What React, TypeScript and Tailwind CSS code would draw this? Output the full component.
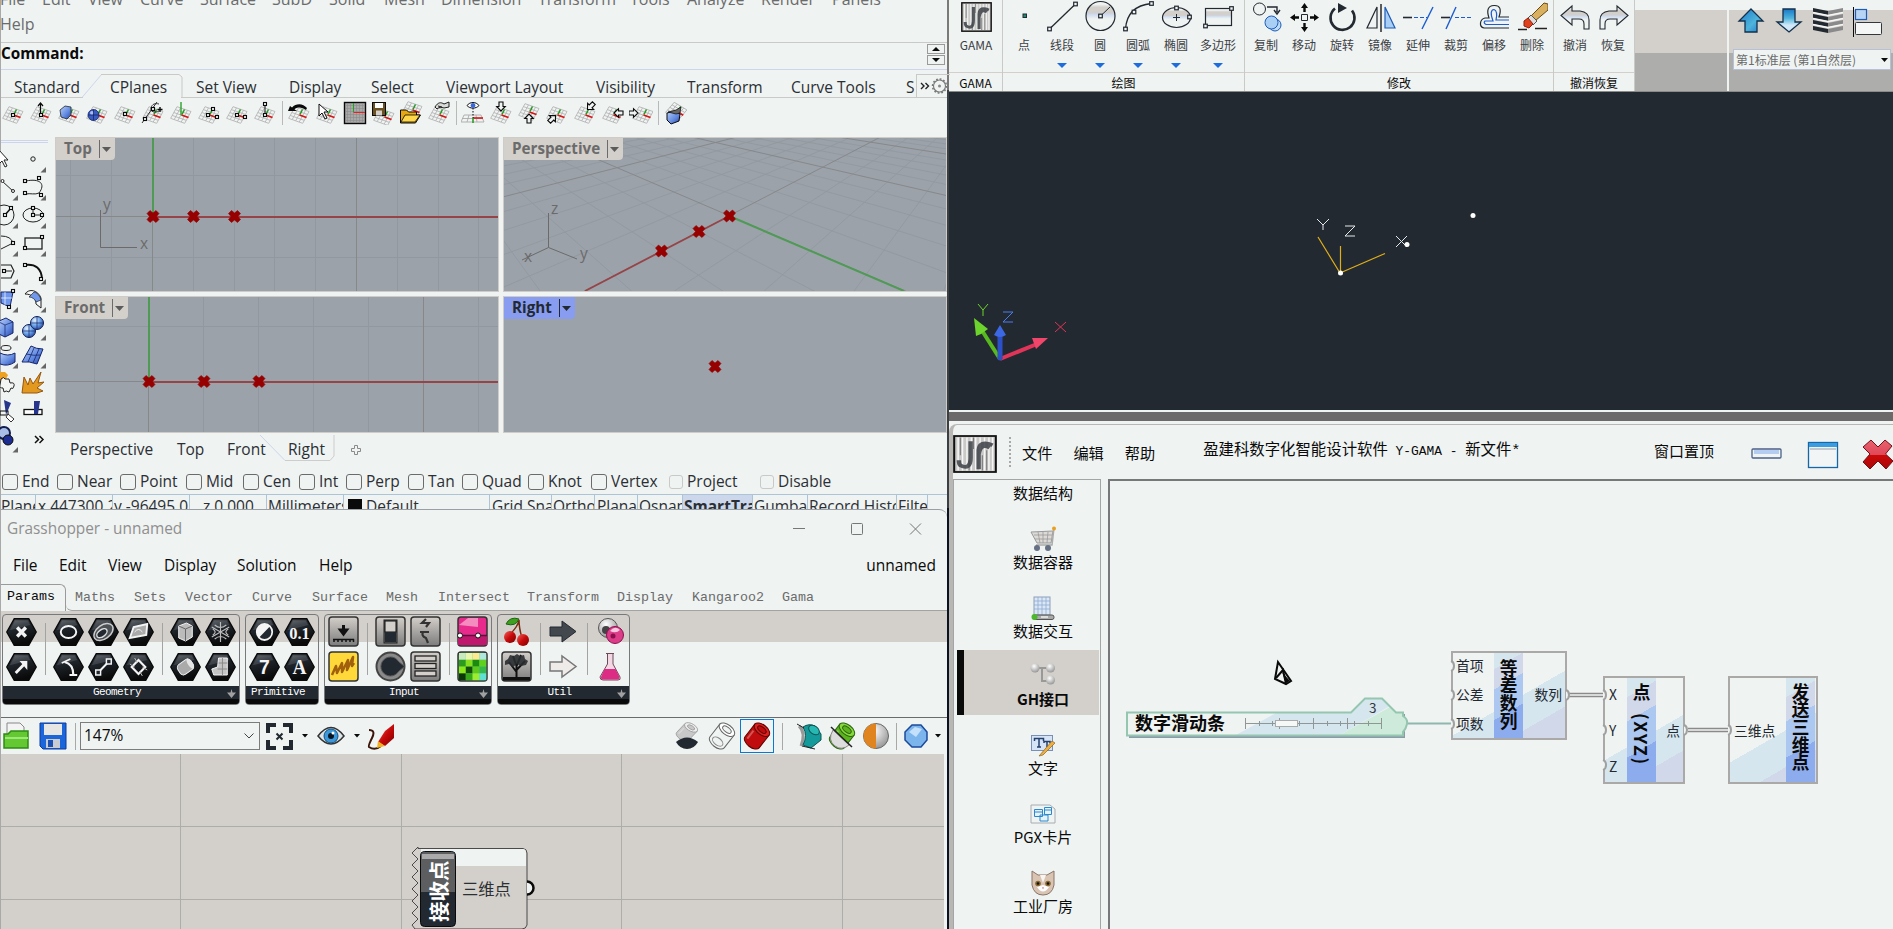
import React, { ReactNode } from "react";

type Cell = [string, string];

const UI = "[font-family:'Open_Sans','Noto_Sans_CJK_SC',sans-serif]";
const CJK = "[font-family:'Noto_Sans_CJK_SC',sans-serif]";
const MONO = "[font-family:'Liberation_Mono','Noto_Sans_CJK_SC',monospace]";

function Svg({ w, h, vb, className = "", children }: { w: number; h: number; vb?: string; className?: string; children: ReactNode }) {
  return (
    <svg width={w} height={h} viewBox={vb ?? `0 0 ${w} ${h}`} preserveAspectRatio="none" className={`block shrink-0 ${className}`} fill="none">
      {children}
    </svg>
  );
}

function Defs() {
  return (
    <svg className="absolute h-0 w-0">
      <defs>
        <linearGradient id="hex" x1="0" y1="0" x2="0.3" y2="1">
          <stop offset="0" stopColor="#5a5e62" />
          <stop offset="0.35" stopColor="#222930" />
          <stop offset="1" stopColor="#0a0a0a" />
        </linearGradient>
        <linearGradient id="metal" x1="0" y1="0" x2="0" y2="1">
          <stop offset="0" stopColor="#d3cfca" />
          <stop offset="1" stopColor="#7c7c7c" />
        </linearGradient>
        <linearGradient id="blue" x1="0" y1="0" x2="1" y2="1">
          <stop offset="0" stopColor="#bcd0f8" />
          <stop offset="0.6" stopColor="#5f88e0" />
          <stop offset="1" stopColor="#2a44a0" />
        </linearGradient>
        <linearGradient id="sky" x1="0" y1="0" x2="0" y2="1">
          <stop offset="0.1" stopColor="#eff3f2" />
          <stop offset="0.2" stopColor="#d3cfca" />
          <stop offset="0.4" stopColor="#d3cfca" />
          <stop offset="0.42" stopColor="#c9d6ee" />
          <stop offset="0.6" stopColor="#eff3f2" />
        </linearGradient>
        <linearGradient id="arrowUp" x1="0" y1="0" x2="1" y2="1">
          <stop offset="0" stopColor="#1977c8" />
          <stop offset="0.6" stopColor="#4fb4dc" />
          <stop offset="1" stopColor="#1977c8" />
        </linearGradient>
        <linearGradient id="arrowDown" x1="0" y1="0" x2="0" y2="1">
          <stop offset="0" stopColor="#1977c8" />
          <stop offset="0.4" stopColor="#4fb4dc" />
          <stop offset="0.7" stopColor="#d0e8f8" />
        </linearGradient>
        <linearGradient id="red" x1="0" y1="0" x2="1" y2="1">
          <stop offset="0" stopColor="#f26060" />
          <stop offset="0.5" stopColor="#c80a0a" />
          <stop offset="1" stopColor="#7c0000" />
        </linearGradient>
        <linearGradient id="cross" x1="0" y1="0" x2="0" y2="1">
          <stop offset="0.05" stopColor="#e8606c" />
          <stop offset="0.5" stopColor="#e04858" />
          <stop offset="0.52" stopColor="#cc0808" />
          <stop offset="1" stopColor="#a80808" />
        </linearGradient>
        <radialGradient id="ball" cx="0.35" cy="0.3" r="0.8">
          <stop offset="0" stopColor="#e4f0ff" />
          <stop offset="0.5" stopColor="#6aa4ea" />
          <stop offset="1" stopColor="#24409c" />
        </radialGradient>
        <radialGradient id="pearl" cx="0.4" cy="0.3" r="0.8">
          <stop offset="0" stopColor="#ffffff" />
          <stop offset="1" stopColor="#8a8a8a" />
        </radialGradient>
      </defs>
    </svg>
  );
}

/* ---------- Rhino toolbar icons ---------- */

function Plane() {
  const lines: string[] = [];
  for (let i = 0; i <= 4; i++) {
    const t = i / 4;
    lines.push(`M${8 + 14 * t} ${5.7 + 4.8 * t}L${1.7 + 14 * t} ${17.3 + 5 * t}`);
    lines.push(`M${8 - 6.4 * t} ${5.7 + 11.6 * t}L${22 - 6.4 * t} ${10.5 + 11.8 * t}`);
  }
  return (
    <>
      <path d={lines.join("")} stroke="#b4b6b4" strokeWidth="0.9" />
      <path d="M13 13.5L15.5 8.5" stroke="#1c9a1c" strokeWidth="1.4" />
      <path d="M12.5 14L19.5 16.5" stroke="#d81414" strokeWidth="1.7" />
    </>
  );
}

const Sq = ({ x, y }: { x: number; y: number }) => <rect x={x - 1.5} y={y - 1.5} width="3" height="3" fill="#eff3f2" stroke="#0a0a0a" strokeWidth="1.1" />;

const arrowShape = "M0 -5L4.3 -0.5H2V4H-2V-0.5H-4.3Z";
const OutArrow = ({ x, y, r }: { x: number; y: number; r: number }) => (
  <path d={arrowShape} transform={`translate(${x} ${y}) rotate(${r})`} fill="#eff3f2" stroke="#0a0a0a" strokeWidth="1.1" />
);

const planeIcons: ReactNode[][] = [
  [
    <><Plane /><Sq x={12} y={14} /></>,
    <><Plane /><path d="M11.5 13V2M9 5l2.5-3L14 5" stroke="#0a0a0a" strokeWidth="1.2" /><Sq x={12} y={14} /></>,
    <><Plane /><path d="M3 9l5-4 6 1v8l-4 4-6-2z" fill="url(#blue)" stroke="#222930" strokeWidth=".8" /></>,
    <><Plane /><circle cx="8.5" cy="14" r="5.5" fill="#3a5cc0" stroke="#14246c" strokeWidth=".8" /><circle cx="7" cy="12" r="2" fill="#a8bcf0" /><path d="M3 14h11M8.5 8.5v11" stroke="#14246c" strokeWidth=".8" /></>,
    <><Plane /><Sq x={12} y={13} /></>,
    <><Plane /><path d="M1 22L16 1M18 3c-4-1-7 0-8 4s4 5 8 3" stroke="#333" strokeWidth="1" /><path d="M19 6v5M16.5 8.500h5" stroke="#0a0a0a" strokeWidth="1.4" /><Sq x={4} y={18} /><Sq x={12} y={8} /></>,
    <><Plane /><path d="M12 14V1" stroke="#2aa12a" strokeWidth="1.4" /></>,
    <><Plane /><Sq x={11} y={14} /><Sq x={16} y={8} /><Sq x={20} y={16} /></>,
    <><Plane /><Sq x={12} y={14} /><Sq x={20} y={16} /></>,
    <><Plane /><path d="M12 12V4" stroke="#0a0a0a" /><Sq x={12} y={14} /><Sq x={12} y={3} /></>,
  ],
  [
    <><Plane /><path d="M1 10L3 5L5 6.500C9 2 16 2 20 7L19 9C15 6 10 5.500 7.500 8.500L10 10z" fill="#0a0a0a" /></>,
    <><Plane /><path d="M4 3v12l3-3 3 6 2-1-3-6h4z" fill="#fff" stroke="#0a0a0a" /></>,
    <><rect x="1.500" y="1.500" width="21" height="21" fill="#a9a9a9" stroke="#0a0a0a" strokeWidth="1.4" /><path d="M4.500 2v20M7.500 2v20M10.500 2v20M13.500 2v20M16.500 2v20M19.500 2v20M2 4.500h20M2 7.500h20M2 10.500h20M2 13.500h20M2 16.500h20M2 19.500h20" stroke="#8c8c8c" strokeWidth=".6" /><path d="M10.500 11V2" stroke="#1ea51e" /><path d="M10.500 11.500H22" stroke="#e82020" /></>,
    <><g transform="translate(1 2)"><Plane /></g><rect x="1.500" y="1.500" width="13" height="13" fill="#6b5020" stroke="#0a0a0a" /><rect x="4" y="2" width="8" height="5" fill="#fff" /><rect x="5" y="9.500" width="6" height="5" fill="#d3cfca" /></>,
    <><g transform="translate(1 -5)"><Plane /></g><path d="M1.500 21V9h6l2 2h8v3h4l-5 8H1.500z" fill="#e8a810" stroke="#0a0a0a" /><path d="M2 21l4-7h15l-5 7z" fill="#ffd84a" stroke="#0a0a0a" strokeWidth=".8" /></>,
    <><Plane /><path d="M8 6c3-5 6-5 9-3l5-2v5l-5 1c-3-1-5-1-7 1zM11 5l4 1" fill="#d8dad8" stroke="#0a0a0a" strokeWidth=".9" /></>,
  ],
  [
    <><path d="M3 14h17l3 7H0zM1 17.500h20M8 14l-2 7M15 14l1 7" stroke="#aaa" strokeWidth=".9" /><path d="M12 17h10" stroke="#d81414" strokeWidth="1.6" /><path d="M12 17v5" stroke="#1c9a1c" strokeWidth="1.5" /><path d="M12 7v10" stroke="#0a0a0a" strokeDasharray="1.500 1.500" /><path d="M6 4.500c3-4 9-4 12 0-3 3.500-9 3.500-12 0z" fill="#fff" stroke="#0a0a0a" /><circle cx="12" cy="4.500" r="2.400" fill="#3a66dc" /></>,
    <><Plane /><OutArrow x={12} y={5} r={180} /></>,
    <><g transform="translate(0 -3)"><Plane /></g><OutArrow x={12} y={18} r={0} /></>,
    <><Plane /><OutArrow x={7} y={18} r={45} /></>,
    <><Plane /><OutArrow x={18} y={5} r={225} /></>,
    <><Plane /><OutArrow x={18} y={12} r={-90} /></>,
    <><g transform="translate(2 0)"><Plane /></g><OutArrow x={4} y={12} r={90} /></>,
  ],
  [
    <><g transform="rotate(12 12 12) translate(1 -4)"><Plane /></g><path d="M4 12l8-2 5 3-1 7-8 3-4-4z" fill="url(#blue)" stroke="#0a0a0a" /><path d="M5 11l8-2 5-3-1 6-4 1z" fill="#666" stroke="#0a0a0a" strokeWidth=".7" /></>,
  ],
];

const ptBlob = "M-3 -6L0 -3.500L3 -6L6 -3L3.500 0L6 3L3 6L0 3.500L-3 6L-6 3L-3.500 0L-6 -3Z";
const Mark = ({ x, y }: { x: number; y: number }) => <path d={ptBlob} transform={`translate(${x} ${y})`} fill="#960000" stroke="#960000" strokeWidth=".6" />;

const toolIcons: [ReactNode, ReactNode][] = [
  [<path d="M8 5v14l3-3 3 6 2-1-3-6h4z" fill="#fff" stroke="#222" />, <circle cx="14" cy="14" r="2.200" stroke="#222" />],
  [<><path d="M11 8l12 11" stroke="#222" /><circle cx="11.500" cy="8" r="1.500" stroke="#222" fill="#fff" /><circle cx="22" cy="18" r="1.500" stroke="#222" fill="#fff" /></>, <><path d="M7 8c14-3 20 3 13 12-4 2-9 0-13 1" stroke="#222" /><Sq x={6} y={8} /><Sq x={20} y={5} /><Sq x={6} y={20} /><Sq x={22} y={22} /></>],
  [<><circle cx="13" cy="14" r="10" stroke="#222" /><path d="M14 14l6-7" stroke="#111" strokeWidth="1.5" /><Sq x={14} y={14} /><Sq x={20} y={7} /></>, <><ellipse cx="14" cy="14" rx="10" ry="7" stroke="#222" /><path d="M14 7v7h9" stroke="#222" /><Sq x={14} y={14} /><Sq x={14} y={7} /><Sq x={23} y={14} /></>],
  [<><path d="M10 7q10 0 12 7l-12 6" stroke="#222" /><Sq x={22} y={14} /></>, <><rect x="6" y="9" width="17" height="11" stroke="#222" strokeWidth="1.300" /><Sq x={23} y={8} /><Sq x={6} y={19} /></>],
  [<><path d="M10 8h10l3 6-3 7h-10" stroke="#222" strokeWidth="1.200" /><path d="M13 14h8" stroke="#222" /><Sq x={13} y={14} /></>, <><path d="M6 8q16 -2 17 14" stroke="#111" strokeWidth="2" /><Sq x={6} y={8} /><Sq x={22} y={22} /></>],
  [<><path d="M10 7h12l-3 15-9-4z" fill="#6f97ee" stroke="#14246c" /><path d="M14 7v13M10 13h11" stroke="#fff" strokeWidth=".7" /><Sq x={22} y={6} /><Sq x={18} y={22} /></>, <><path d="M6 9c4-6 13-4 16 4v10l-5-4c0-7-5-10-11-10z" fill="#f8fafa" stroke="#222" /><path d="M10 12l5-5c4 1 6 4 7 8l-5 2c-1-3-4-5-7-5z" fill="#7098ec" stroke="#222" strokeWidth=".7" /></>],
  [<><path d="M8 8l7-3 7 4v11l-8 4-6-3z" fill="url(#blue)" stroke="#14246c" /><path d="M8 9l6 3 8-3M14 12v12" stroke="#14246c" strokeWidth=".7" /></>, <><circle cx="10" cy="18" r="6.500" fill="url(#ball)" stroke="#101c50" /><circle cx="18" cy="10" r="6.500" fill="url(#ball)" stroke="#101c50" /><path d="M4 18h12M10 12v12M12 10h12M18 4v12" stroke="#14246c" strokeWidth=".7" /></>],
  [<><ellipse cx="15" cy="7" rx="5" ry="2.500" stroke="#222" /><path d="M9 12q8 4 15 0v9q-7 5-15 2z" fill="url(#blue)" stroke="#14246c" /></>, <><path d="M12 5q5 3 12 3l-6 15q-8-3-15-2z" fill="url(#blue)" stroke="#14246c" /><path d="M7 13q8 2 15 1M15 7l-6 14M20 8l-6 14" stroke="#14246c" strokeWidth=".8" /></>],
  [<><path d="M6 3h8l3 3-3 6H8z" fill="#f0a020" /><path d="M10 10q3-3 4 0h4l1 4q5-1 4 3t-3 2l-2 4q-3-2-5 0l-1-4q-4 0-3-3z" fill="#f4f6f4" stroke="#222" /></>, <path d="M3 24L5 8l4 8 2-7 3 6 8-12-3 11 6-1-7 6 6 3-6 2z" fill="#e39820" stroke="#96570c" />],
  [<><path d="M13 3l7 3-5 12z" fill="#26368c" /><rect x="9" y="14" width="8" height="4" stroke="#111" /><path d="M17 17l6 5-3 3-5-5z" fill="#fff" stroke="#333" /></>, <><rect x="5" y="12.500" width="18" height="5" fill="#fff" stroke="#111" strokeWidth="1.300" /><path d="M15 4h6l-2 13h-4z" fill="#26368c" /></>],
  [<><circle cx="13" cy="8" r="6" fill="#a8bce8" stroke="#101c50" strokeWidth="2" /><circle cx="17" cy="15" r="5" fill="#1c2c90" stroke="#0a0a0a" /></>, <path d="M16 11l3.500 3.500L16 18M20.500 11l3.500 3.500L20.500 18" stroke="#111" strokeWidth="1.500" />],
];

/* ---------- Rhino window ---------- */

const menuItems: Cell[] = [
  ["File", "w-[42px]"], ["Edit", "w-[46px]"], ["View", "w-[52px]"], ["Curve", "w-[60px]"], ["Surface", "w-[72px]"], ["SubD", "w-[57px]"],
  ["Solid", "w-[55px]"], ["Mesh", "w-[57px]"], ["Dimension", "w-[97px]"], ["Transform", "w-[92px]"], ["Tools", "w-[57px]"],
  ["Analyze", "w-[74px]"], ["Render", "w-[71px]"], ["Panels", "w-[60px]"],
];
const topTabs: Cell[] = [
  ["Standard", "w-[96px]"], ["CPlanes", "w-[86px]"], ["Set View", "w-[93px]"], ["Display", "w-[82px]"], ["Select", "w-[75px]"],
  ["Viewport Layout", "w-[150px]"], ["Visibility", "w-[91px]"], ["Transform", "w-[104px]"], ["Curve Tools", "w-[115px]"], ["S", "w-[9px]"],
];
const snaps: Cell[] = [
  ["End", "w-[55px]"], ["Near", "w-[63px]"], ["Point", "w-[66px]"], ["Mid", "w-[57px]"], ["Cen", "w-[56px]"], ["Int", "w-[47px]"], ["Perp", "w-[62px]"],
  ["Tan", "w-[54px]"], ["Quad", "w-[66px]"], ["Knot", "w-[63px]"], ["Vertex", "w-[78px]"], ["Project", "w-[91px]"], ["Disable", "w-[91px]"],
];
const statusCells: Cell[] = [
  ["Plane", "w-[35px]"], ["x 447300.2", "w-[77px] pl-[2px]"], ["y -96495.0", "w-[77px] pl-[1px]"], ["z 0.000", "w-[77px] pl-[13px]"], ["Millimeters", "w-[77px] pl-px"],
  ["Default", "w-[146px] pl-1"], ["Grid Snap", "w-[62px] pl-[2px]"], ["Ortho", "w-[43px] pl-px"], ["Planar", "w-[43px] pl-[2px]"], ["Osnap", "w-[45px] pl-px"],
  ["SmartTrack", "w-[70px] pl-px font-bold bg-[#ccd7ec]"], ["Gumball", "w-[55px] pl-px"], ["Record History", "w-[89px] pl-px"], ["Filter", "w-[31px] pl-px"],
];

function RhinoHead() {
  return (
    <>
      <div className="h-[43px] overflow-hidden border-b border-[#c9c9c8] text-[16px] text-[#6b6b6b]">
        <div className="-ml-px -mt-[13px] flex h-[24px] items-center">
          {menuItems.map(([t, w]) => <span key={t} className={`shrink-0 whitespace-nowrap ${w}`}>{t}</span>)}
        </div>
        <div className="-ml-px flex h-[25px] items-center">Help</div>
      </div>
      <div className="flex h-[27px] items-start justify-between border-b border-[#cdd5e8] pr-[2px]">
        <span className="-mt-px text-[15.300px] font-bold leading-[22px] text-[#0a0a0a]">Command:</span>
        <div className="mt-[1px] flex flex-col gap-[1px]">
          {["M0 4L4 0L8 4z", "M0 0L4 4L8 0z"].map((d) => (
            <div key={d} className="flex h-[10px] w-[18px] items-center justify-center border border-[#9a9a9a]"><Svg w={8} h={4}><path d={d} fill="#0a0a0a" /></Svg></div>
          ))}
        </div>
      </div>
      <div className="relative flex h-[28px] items-center border-b border-[#c9c9c8] pl-[13px] text-[15.500px] text-[#2b2f34]">
        <Svg w={110} h={25} className="absolute -bottom-px left-[80px]">
          <path d="M2 24.500H100" stroke="#eff3f2" /><path d="M1 24.500L20.500 1.500" stroke="#cdd5ee" /><path d="M20 1.500H98L101 4V24.500" stroke="#c9c9c8" />
        </Svg>
        {topTabs.map(([t, w]) => <span key={t} className={`relative shrink-0 overflow-hidden whitespace-nowrap pt-[6px] leading-[22px] ${w}`}>{t}</span>)}
        <div className="ml-px mt-[4px] flex h-[24px] items-center border-l border-t border-[#c9c9c8] pl-[3px]">
          <Svg w={30} h={22}>
            <path d="M1 8l3 3L1 14M5.500 8L8.500 11L5.500 14" stroke="#222" strokeWidth="1.400" />
            <circle cx="19.500" cy="11" r="6" stroke="#777" strokeWidth="1.100" /><circle cx="19.500" cy="11" r="7" stroke="#777" strokeWidth="1.500" strokeDasharray="1.800 1.860" /><circle cx="19.500" cy="11" r="1.500" fill="#888" />
          </Svg>
        </div>
      </div>
      <div className="-ml-[2px] flex h-[32px] items-center pb-[3px]">
        {planeIcons.map((g, i) => (
          <React.Fragment key={i}>
            {i > 0 && <div className="flex w-[6px] justify-center"><div className="h-[24px] w-px bg-[#b9b9b7]" /></div>}
            {g.map((ic, j) => <div key={j} className="flex w-[28px] shrink-0 justify-center"><Svg w={24} h={24}>{ic}</Svg></div>)}
          </React.Fragment>
        ))}
      </div>
    </>
  );
}

const GRID = "#92989f";
const MAJOR = "#87888a";

function perspectivePaths() {
  const O = [729.3, 215.7], Vx = [-96.5, -6.1], Vy = [-35, -6], b = 0.0946, e = 0.0931;
  const P = (x: number, y: number) => {
    const w = 1 - b * x - e * y;
    return `${((O[0] + x * Vx[0] + y * Vy[0]) / w).toFixed(1)} ${((O[1] + x * Vx[1] + y * Vy[1]) / w).toFixed(1)}`;
  };
  let minor = "", major = "";
  for (let n = -15; n <= 9; n++) {
    const a = `M${P(n, -25)}L${P(n, Math.min(14, (0.9 - b * n) / e))}M${P(-25, n)}L${P(Math.min(14, (0.9 - e * n) / b), n)}`;
    if (n === 5) continue;
    if (n % 5 === 0) major += a;
    else minor += a;
  }
  return { minor, major };
}
const persp = perspectivePaths();

function ViewLabel({ text, on = false }: { text: string; on?: boolean }) {
  return (
    <div className={`absolute left-0 top-0 flex h-[22px] items-center rounded-br-[4px] pl-[8px] pr-[4px] text-[15.200px] font-bold ${on ? "bg-[#889df0] text-[#222930]" : "bg-[#d3cfca] text-[#6b6b6b]"}`}>
      <span className="-mt-[2px]">{text}</span>
      <span className={`ml-[7px] mr-[2px] h-[18px] w-px ${on ? "bg-[#222930]" : "bg-[#6b6b6b]"}`} />
      <Svg w={9} h={5}><path d="M0 0H9L4.500 5z" fill={on ? "#222930" : "#5b5b5b"} /></Svg>
    </div>
  );
}

function Viewport({ label, vb, h, on, children }: { label: string; vb: string; h: number; on?: boolean; children: ReactNode }) {
  return (
    <div className="relative box-content w-[442px] shrink-0 border border-[#cfccc8] bg-[#9ba2aa]">
      <Svg w={442} h={h} vb={vb}>{children}</Svg>
      <ViewLabel text={label} on={on} />
    </div>
  );
}

function RhinoMain() {
  return (
    <div className="flex h-[303px]">
      <div className="w-[54px] shrink-0 pt-[10px]">
        <div className="h-[3px] w-[47px] border-y border-[#cdd5ee]" />
        <div className="-ml-[10px] mt-[2px]">
          {toolIcons.map(([l, r], i) => (
            <div key={i} className="flex h-[28px]">
              {[l, r].map((ic, j) => (
                <Svg key={j} w={28} h={28}>
                  {ic}
                  {i !== 9 && i !== 8 && !(i === 0 && j === 0) && !(i === 10 && j === 1) && <path d="M21.500 27.500L27 22V27.500z" fill="#666" />}
                </Svg>
              ))}
            </div>
          ))}
        </div>
      </div>
      <div className="mt-[7px] grid grid-cols-[444px_444px] content-start gap-x-[4px] gap-y-[4px]">
        <Viewport label="Top" vb="56 138 442 153" h={153}>
          <path d="M70.500 130V300M111.500 130V300M193.500 130V300M234.500 130V300M274.500 130V300M315.500 130V300M397.500 130V300M438.500 130V300M478.500 130V300M50 175.500H500M50 257.500H500" stroke={GRID} />
          <path d="M356.500 130V300M152.500 216V300M50 216.500H153" stroke={MAJOR} />
          <path d="M153 130V216" stroke="#4f9a54" strokeWidth="2" /><path d="M153 217H500" stroke="#964448" strokeWidth="2" />
          <Mark x={153} y={216.500} /><Mark x={193.500} y={216.500} /><Mark x={234.500} y={216.500} />
          <path d="M100.500 210V247.500H137" stroke="#6b6b6b" />
          <text x="103" y="210" fontSize="15.500" fill="#6b6b6b">y</text><text x="140" y="248.500" fontSize="15.500" fill="#6b6b6b">x</text>
        </Viewport>
        <Viewport label="Perspective" vb="504 138 442 153" h={153}>
          <path d={persp.minor} stroke="#93999f" strokeWidth=".9" /><path d={persp.major} stroke={MAJOR} />
          <path d="M729.300 216L585 291" stroke="#964448" strokeWidth="1.800" /><path d="M729.300 216L904 291" stroke="#4f9a54" strokeWidth="2" />
          <Mark x={729.500} y={216} /><Mark x={699} y={231.500} /><Mark x={661.500} y={251} />
          <path d="M548.500 213V247.500L577 259M548.500 247.500L522 260" stroke="#6b6b6b" />
          <text x="551" y="214" fontSize="15.500" fill="#6b6b6b">z</text><text x="580" y="259" fontSize="15.500" fill="#6b6b6b">y</text><text x="524" y="262" fontSize="15.500" fill="#6b6b6b">x</text>
        </Viewport>
        <Viewport label="Front" vb="56 297 442 135" h={135}>
          <path d="M94.500 290V440M203.500 290V440M258.500 290V440M313.500 290V440M368.500 290V440M478.500 290V440M50 326.500H500" stroke={GRID} />
          <path d="M423.500 290V440M148.500 382V440M50 381.500H149" stroke={MAJOR} />
          <path d="M149 290V381" stroke="#4f9a54" strokeWidth="2" /><path d="M149 382H500" stroke="#964448" strokeWidth="2" />
          <Mark x={149} y={381.500} /><Mark x={204} y={381.500} /><Mark x={259} y={381.500} />
        </Viewport>
        <Viewport label="Right" on vb="504 297 442 135" h={135}><Mark x={715} y={366.500} /></Viewport>
      </div>
    </div>
  );
}

function RhinoFoot() {
  return (
    <>
      <div className="relative flex h-[35px] items-center pb-[2px] pl-[69px] text-[15.500px] text-[#2b2f34]">
        <span className="w-[107px]">Perspective</span><span className="w-[50px]">Top</span><span className="w-[61px]">Front</span><span className="w-[62px]">Right</span>
        <Svg w={12} h={12}><path d="M4.500 1.500h3v3h3v3h-3v3h-3v-3h-3v-3h3z" stroke="#8a8a8a" /></Svg>
        <Svg w={80} h={28} className="absolute left-[258px] top-[1px]"><path d="M1 1L26 26.500" stroke="#cdd5ee" /><path d="M26 26.500H71L75 22V1" stroke="#cdcdcc" /></Svg>
      </div>
      <div className="flex h-[27px] items-center border-b border-[#adc3d6] pl-px pt-[1px] text-[15.500px] text-[#2b2f34]">
        {snaps.map(([t, w], i) => (
          <label key={t} className={`flex shrink-0 items-center gap-[4px] whitespace-nowrap ${w}`}>
            <span className={`block shrink-0 rounded-[3px] border ${i > 10 ? "h-[14px] w-[14px] border-[#c9c9c8]" : "h-[16px] w-[16px] border-[#6b6b6b]"}`} />{t}
          </label>
        ))}
      </div>
      <div className="flex h-[14px] overflow-hidden text-[15.500px] leading-[23px] text-[#2b2f34]">
        {statusCells.map(([t, w]) => (
          <div key={t} className={`flex h-[23px] shrink-0 overflow-hidden whitespace-nowrap border-r border-[#adc3d6] ${w}`}>
            {t === "Default" && <span className="mr-[4px] mt-[4px] h-[13px] w-[14px] shrink-0 bg-[#0a0a0a]" />}{t}
          </div>
        ))}
      </div>
    </>
  );
}

/* ---------- Grasshopper window ---------- */

const Hex = ({ children }: { children: ReactNode }) => (
  <Svg w={31} h={28} vb="0 0 32 28">
    <path d="M8.500 .8H23.500L31.200 14L23.500 27.200H8.500L.8 14Z" fill="url(#hex)" stroke="#0a0a0a" strokeWidth="1.400" />
    <path d="M9.500 2.500H22.500L25 7L5 12L4 12Z" fill="#fff" opacity=".13" />
    {children}
  </Svg>
);
const Tile = ({ fill = "url(#metal)", children }: { fill?: string; children: ReactNode }) => (
  <Svg w={31} h={31}><rect x="1" y="1" width="29" height="29" rx="3" fill={fill} stroke="#333" strokeWidth="1.500" />{children}</Svg>
);
const W = "#f4f4f4";
const HexText = ({ t, serif = true }: { t: string; serif?: boolean }) => (
  <Hex><text x="16" y="21" fontSize={t.length > 1 ? 17 : 20} fontWeight="bold" fill={W} textAnchor="middle" fontFamily={serif ? "Liberation Serif" : "Liberation Sans"}>{t}</text></Hex>
);

const greens = ["#c8e8c0", "#e8f4b0", "#ffe890", "#b0e8e0", "#2c9a1c", "#86e020", "#1c8a10", "#60d020", "#88e818", "#144c0c", "#5cc81c", "#34b84c", "#0c3808", "#36a818", "#9cec30", "#60e0d0"];

const gGeo: ReactNode[][][] = [
  [[<Hex><path d="M11.500 9.500l9 9M20.500 9.500l-9 9" stroke={W} strokeWidth="3.500" /></Hex>, <Hex><path d="M10 20L19 11" stroke={W} strokeWidth="3" /><path d="M14 8h8v9z" fill={W} /></Hex>]],
  [
    [<Hex><ellipse cx="16" cy="14" rx="8" ry="6" stroke={W} strokeWidth="2" /></Hex>, <Hex><path d="M12 9q9 2 9 13" stroke={W} strokeWidth="2.200" /><path d="M9 10l9-4M17 22h8" stroke={W} strokeWidth="1.800" /></Hex>],
    [<Hex><g transform="rotate(-35 16 14)"><ellipse cx="16" cy="14" rx="11" ry="7" fill="#4c5156" stroke="#ccc" strokeWidth="1.500" /><ellipse cx="14" cy="14" rx="6" ry="3.500" fill="#222930" stroke="#ddd" strokeWidth="1.500" /></g></Hex>, <Hex><path d="M10 20L22 8" stroke={W} strokeWidth="2" /><rect x="8" y="17" width="5" height="5" fill="#222930" stroke={W} strokeWidth="1.500" /><rect x="19" y="6" width="5" height="5" fill="#222930" stroke={W} strokeWidth="1.500" /></Hex>],
    [<Hex><path d="M7 20L11 9L25 6L24 17Z" fill="#aaa" stroke={W} strokeWidth="2" /><path d="M12 14q4-5 8 0" stroke={W} /></Hex>, <Hex><path d="M16 7l7 7-7 7-7-7z" stroke={W} strokeWidth="2.200" /><path d="M12 5l3 5M20 23l-3-5M7 11l5 3M25 17l-5-3" stroke="#bbb" /></Hex>],
  ],
  [
    [<Hex><path d="M9 8l8-3 6 3v11l-7 4-7-3z" fill="#bbb" stroke={W} /><path d="M9 8l7 3v12M16 11l7-3" stroke="#666" /></Hex>, <Hex><g transform="rotate(-35 16 14)"><rect x="8" y="8" width="16" height="12" rx="4" fill="#aaa" stroke={W} /><ellipse cx="22" cy="14" rx="2.500" ry="6" fill="#e4e4e4" /></g></Hex>],
    [<Hex><path d="M16 4v20M7 9l18 10M25 9L7 19M10 7q6 5 12 0M10 21q6-5 12 0M8 11q5 3 0 6M24 11q-5 3 0 6" stroke="#bbb" strokeWidth="1.200" /></Hex>, <Hex><path d="M14 5h9v17H9l-2-6 6-2z" fill="#c4c4c4" stroke={W} /><path d="M14 10h9M13 16h10M18 5v17" stroke="#888" /></Hex>],
  ],
];
const gPrim: ReactNode[][][] = [[
  [<Hex><circle cx="16" cy="14" r="8" fill="#222930" stroke={W} strokeWidth="1.800" /><path d="M10.300 19.700L21.700 8.300A8 8 0 0 0 10.300 19.700z" fill={W} /></Hex>, <HexText t="7" serif={false} />],
  [<HexText t="0.1" />, <HexText t="A" />],
]];
const gInput: ReactNode[][][] = [
  [[<Tile><path d="M15.500 9v5M12.500 14l3 4 3-4z" fill="#111" stroke="#111" strokeWidth="3" /><path d="M5 23.500h21M6 26v-3M10 26v-3M14 26v-3M18 26v-3M22 26v-3M25.500 26v-3" stroke="#111" strokeWidth="1.500" /></Tile>, <Tile fill="#ffd83a"><path d="M4 24L8 15L9 22L14 12L14 21L20 9L19 19L25 6L24 15L26 12" stroke="#a0600c" strokeWidth="2.500" strokeLinejoin="round" /></Tile>]],
  [
    [<Tile><rect x="9" y="4" width="13" height="23" fill="#666" stroke="#222" /><rect x="10" y="5" width="11" height="11" fill="#d3cfca" stroke="#111" /><rect x="10" y="16" width="11" height="10" fill="#222930" /></Tile>, <Svg w={31} h={31}><circle cx="15.500" cy="15.500" r="14" fill="#8a8a8a" stroke="#444" strokeWidth="2" /><path d="M15.500 6a9.500 9.500 0 1 0 8 14.500l6-5-6-5a9.500 9.500 0 0 0-8-4.500z" fill="#222930" stroke="#555" /></Svg>],
    [<Tile><path d="M16 3l-4 4h7l-3 4M10 16h9M13 16q-2 4 3 6l2 5" stroke="#333" strokeWidth="2.200" /></Tile>, <Tile>{[5, 12.500, 20].map((y) => <rect key={y} x="5" y={y} width="21" height="5" fill="#d3cfca" stroke="#222" strokeWidth="1.300" />)}</Tile>],
  ],
  [[<Tile fill="#e82a8c"><path d="M1 19H30V29H1z" fill="#c0186c" /><path d="M2 9l9-7h10v9z" fill="#f48cc0" /><path d="M1 19.500h29" stroke="#58103c" strokeWidth="1.500" /><circle cx="3" cy="19.500" r="2.500" fill="#fff" stroke="#111" /><circle cx="21" cy="19.500" r="2.500" fill="#fff" stroke="#111" /></Tile>, <Tile fill="#6c6">{greens.map((c, i) => <rect key={i} x={2 + (i % 4) * 6.8} y={2 + Math.floor(i / 4) * 6.8} width="6.800" height="6.800" fill={c} />)}</Tile>]],
];
const gUtil: ReactNode[][][] = [
  [[<Svg w={31} h={31}><path d="M8 19Q17 11 18 4Q18 12 21 22" stroke="#7a2a10" strokeWidth="1.500" /><path d="M5 8Q9 0 18 3Q15 11 5 8z" fill="#3fa020" stroke="#1c6410" /><circle cx="9" cy="21" r="6" fill="url(#red)" /><circle cx="22" cy="24" r="6" fill="url(#red)" /></Svg>,
    <Tile><rect x="2" y="26" width="27" height="3.500" fill="#111" /><path d="M15.500 27V14M15.500 21L8 11M15.500 19L24 10M15.500 15L12 5M15.500 15L20 4" stroke="#111" strokeWidth="2" /><path d="M4 10l3-2 2-4 4 1 3-2 3 2 4-1 1 4 3 2-2 4-5 1-4-2-4 3-4-3-4 1z" fill="#2a2d30" opacity=".9" /></Tile>]],
  [[<Svg w={31} h={31}><path d="M2 11H14V5L28 15.500L14 26V20H2z" fill="#42484e" stroke="#222930" /></Svg>, <Svg w={31} h={31}><path d="M2 11H14V5L28 15.500L14 26V20H2z" fill="#eeebe8" stroke="#777" strokeWidth="1.500" /></Svg>]],
  [[<Svg w={31} h={31}><circle cx="13" cy="12" r="9.500" fill="url(#pearl)" stroke="#555" /><circle cx="11" cy="14" r="4" fill="#444" /><circle cx="20" cy="19" r="8.500" fill="#dc3c88" stroke="#8c1050" /><path d="M15 15q5-6 10-1-4 4-10 1z" fill="#f9c8e0" /><circle cx="18" cy="20" r="2.500" fill="#8c1050" /></Svg>, <Svg w={31} h={31}><path d="M11 2.500h8M12.500 3v10L5 26q0 3 3 3h15q3 0 2-3L18 13V3" fill="#f3d8e4" stroke="#6c4a58" /><path d="M9.500 18h11l4 8q0 2-2 2.500H8Q5.500 28 6 26z" fill="#dc2c84" /></Svg>]],
];

function Group({ title, cols, w, drop = true }: { title: string; cols: ReactNode[][][]; w: string; drop?: boolean }) {
  return (
    <div className={`flex h-[91px] flex-col overflow-hidden rounded-[4px] border border-[#77797a] ${w}`}>
      <div className="flex h-[72px] items-center justify-between px-[3px] pb-[3px]">
        {cols.map((g, i) => (
          <React.Fragment key={i}>
            {i > 0 && <div className="h-[52px] w-px bg-[#a3a3a2]" />}
            <div className="flex gap-[4px]">
              {g.map((c, j) => (
                <div key={j} className="flex flex-col gap-[4px]">
                  {c.map((ic, k) => <div key={k} className="flex h-[31px] w-[31px] items-center justify-center">{ic}</div>)}
                </div>
              ))}
            </div>
          </React.Fragment>
        ))}
      </div>
      <div className={`relative flex h-[18px] items-start justify-center border-b-[5px] border-[#0a0a0a] bg-[#222930] pr-[8px] text-[11px] leading-[13px] tracking-[-0.600px] text-white ${MONO}`}>
        {title}
        {drop && <Svg w={9} h={9} className="absolute right-[3px] top-[3px]"><path d="M4.500 0L5.500 3.500H9L4.500 9L0 3.500H3.500z" fill="#a0a0a0" /></Svg>}
      </div>
    </div>
  );
}

const ghMenu: Cell[] = [["File", "w-[46px]"], ["Edit", "w-[49px]"], ["View", "w-[56px]"], ["Display", "w-[73px]"], ["Solution", "w-[82px]"], ["Help", "w-[60px]"]];
const ghTabs: Cell[] = [
  ["Maths", "w-[59px]"], ["Sets", "w-[51px]"], ["Vector", "w-[67px]"], ["Curve", "w-[60px]"], ["Surface", "w-[74px]"], ["Mesh", "w-[52px]"],
  ["Intersect", "w-[89px]"], ["Transform", "w-[90px]"], ["Display", "w-[75px]"], ["Kangaroo2", "w-[90px]"], ["Gama", "w-[40px]"],
];

const Sep = () => <div className="h-[27px] w-px shrink-0 bg-[#a8a8a6]" />;
const Caret = () => <Svg w={6} h={4}><path d="M0 0H6L3 3.500z" fill="#0a0a0a" /></Svg>;

function Cyl({ a, b, line = "#333" }: { a: string; b: string; line?: string }) {
  return (
    <g transform="rotate(38 14 14)">
      <path d="M5 6V22a9 5 0 0 0 18 0V6z" fill={a} stroke={line} />
      <ellipse cx="14" cy="6" rx="9" ry="5" fill={b} stroke={line} />
      <ellipse cx="14" cy="6" rx="5" ry="2.500" fill={a} stroke={line} />
      <path d="M8 12V22" stroke="#fff" strokeWidth="2" opacity=".3" />
    </g>
  );
}

function GhToolbar() {
  return (
    <div className="flex h-[37px] shrink-0 items-center border-t border-[#6b6b6b] pl-[2px] pr-[6px]">
      <Svg w={28} h={28}><path d="M4 14V1H17L21 5V14z" fill="#f4f4f4" stroke="#888" /><path d="M1 26V12H5L8 9H25V26z" fill="#63c832" stroke="#2c8c14" strokeWidth="1.500" /><path d="M2 16H25" stroke="#9ce878" strokeWidth="2" /></Svg>
      <Svg w={28} h={28} className="ml-[8px]"><path d="M1 1H27V27H4L1 24z" fill="#1c66dc" stroke="#0c3a9c" /><rect x="5" y="2" width="18" height="11" fill="#e6e6e4" /><rect x="7" y="17" width="14" height="9" fill="#c9ccd0" /><rect x="9" y="18" width="5" height="7" fill="#1c50b4" /></Svg>
      <div className="ml-[8px]"><Sep /></div>
      <div className="ml-[4px] flex h-[28px] w-[180px] shrink-0 items-center justify-between border border-[#7c7c7c] pl-[3px] pr-[4px] text-[15.500px] text-[#0a0a0a]">147%<Svg w={12} h={8}><path d="M1.500 1.500L6 6L10.500 1.500" stroke="#444" /></Svg></div>
      <Svg w={29} h={29} className="ml-[5px]"><path d="M1 11V1H11V5H5V11zM18 1H28V11H24V5H18zM1 18V28H11V24H5V18zM28 18V28H18V24H24V18z" fill="#222930" /><path d="M11.500 11.500l6 6M17.500 11.500l-6 6" stroke="#222930" strokeWidth="2" /></Svg>
      <div className="ml-[8px]"><Caret /></div>
      <Svg w={28} h={20} className="ml-[9px]"><path d="M1 10Q14 -7 27 10Q14 26 1 10z" fill="#dfe6ea" stroke="#333" strokeWidth="1.500" /><circle cx="14" cy="10" r="7" fill="#3c98d8" stroke="#14507c" /><circle cx="14" cy="10" r="3" fill="#0a1420" /><circle cx="16" cy="7" r="1.500" fill="#fff" /></Svg>
      <div className="ml-[9px]"><Caret /></div>
      <Svg w={28} h={28} className="ml-[7px]"><path d="M2 8Q9 8 5 16T2 25Q8 29 14 24" stroke="#3c1408" strokeWidth="2" /><path d="M11 20L18 9L27 2V16L18 24z" fill="url(#red)" /><path d="M11 19L18 24L10 26z" fill="#f0b020" /></Svg>
      <div className="grow" />
      <div className="flex items-center">
        <Svg w={28} h={28}><g transform="translate(2 0) scale(.85 .7)"><Cyl a="#c8c8c8" b="#eee" line="#999" /></g><path d="M3 20q11-9 22 0-4 7-11 7T3 20z" fill="#222930" /></Svg>
        <Svg w={28} h={28} className="ml-[7px]"><Cyl a="#eff3f2" b="#fff" line="#666" /><g transform="rotate(38 14 14)"><ellipse cx="14" cy="21" rx="6" ry="3.500" stroke="#888" /></g></Svg>
        <div className="ml-[4px] flex h-[34px] w-[34px] items-center justify-center border border-[#0878d4]"><Svg w={28} h={28}><Cyl a="#c00c0c" b="#dc2020" line="#5c0000" /></Svg></div>
        <div className="ml-[8px]"><Sep /></div>
        <Svg w={28} h={28} className="ml-[12px]"><path d="M4 4q7 6 2 20" stroke="#999" strokeWidth="3" /><path d="M8 5Q14 1 20 4L26 12V18L16 26L8 23Q13 13 8 5z" fill="#149a9a" stroke="#0c5454" /><ellipse cx="19" cy="8" rx="6" ry="4" transform="rotate(38 19 8)" fill="#28b8b4" stroke="#0c5454" /><path d="M2 2l7 4M7 24l13 3" stroke="#222" /></Svg>
        <Svg w={28} h={28} className="ml-[5px]"><Cyl a="#5cb41c" b="#86d83c" line="#2c6410" /><path d="M5 8L21 23Q14 29 7 24Q-1 18 5 8z" fill="#ddd" stroke="#888" /><path d="M3 5L24 25" stroke="#222" strokeWidth="1.500" /></Svg>
        <Svg w={28} h={28} className="ml-[6px]"><circle cx="14" cy="14" r="12.500" fill="url(#pearl)" stroke="#666" /><path d="M14 1.500a12.500 12.500 0 0 0 0 25z" fill="#e08420" /></Svg>
        <div className="ml-[6px]"><Sep /></div>
        <Svg w={26} h={26} className="ml-[6px]"><path d="M9 2L18 2L24 9L24 17L18 24L9 24L2 17L2 9z" fill="#7cb4ec" stroke="#1c4a9c" strokeWidth="1.500" /><path d="M6 9L12 4L19 6L13 14z" fill="#c4e0fa" /></Svg>
        <div className="ml-[6px]"><Caret /></div>
      </div>
    </div>
  );
}

function Grasshopper() {
  return (
    <div className="flex h-[420px] flex-col overflow-hidden rounded-tr-[8px] border-t border-[#9a9fa4] bg-[#eff3f2]">
      <div className="flex h-[38px] shrink-0 items-center justify-between pl-[6px] pr-[25px] text-[15.400px] text-[#8f8f8f]">
        Grasshopper - unnamed
        <Svg w={130} h={14}><path d="M1 6.500h12M118 1.500l11 11M129 1.500l-11 11" stroke="#777" /><rect x="59.500" y="1.500" width="11" height="11" rx="1" stroke="#777" /></Svg>
      </div>
      <div className="flex h-[36px] shrink-0 items-center pl-[12px] pr-[11px] text-[15.500px] text-[#0a0a0a]">
        {ghMenu.map(([t, w]) => <span key={t} className={w}>{t}</span>)}
        <span className="ml-auto">unnamed</span>
      </div>
      <div className={`flex h-[27px] shrink-0 text-[13.330px] ${MONO}`}>
        <div className="-mb-px flex w-[65px] shrink-0 items-center rounded-tr-[6px] border-r border-t border-[#9a9a9a] pb-[3px] pl-[6px] text-[#0a0a0a]">Params</div>
        <div className="flex grow items-center rounded-bl-[6px] border-b border-[#a3a3a2] pl-[9px] pt-[2px] text-[#6b6b6b]">
          {ghTabs.map(([t, w]) => <span key={t} className={w}>{t}</span>)}
        </div>
      </div>
      <div className="flex h-[106px] shrink-0 items-start gap-[5px] bg-[linear-gradient(#d3cfca_31px,#eff3f2_31px)] pl-[1px] pt-[3px]">
        <Group title="Geometry" cols={gGeo} w="w-[238px]" />
        <Group title="Primitive" cols={gPrim} w="w-[74px]" drop={false} />
        <Group title="Input" cols={gInput} w="w-[168px]" />
        <Group title="Util" cols={gUtil} w="w-[133px]" />
      </div>
      <GhToolbar />
      <div className="relative mr-[3px] grow overflow-hidden bg-[#d3cfca]">
        <Svg w={946} h={175} vb="1 754 946 175">
          <path d="M180.500 753V929M401.500 753V929M621.500 753V929M842.500 753V929M0 826.500H947M0 899.500H947" stroke="#adadaa" />
          <path d="M418 848.500H523Q527 849 527 853V925Q526 929 522 929H415L412 925l6-6-6-6 6-6-6-6 6-6-6-6 6-6-6-6 6-6-6-6 6-6-6-6 6-6z" fill="#d3cfca" stroke="#4a4a4a" />
          <path d="M421 849H523Q526 849 526 853V866H421z" fill="#eff3f2" />
          <rect x="420.500" y="851.500" width="35" height="75" rx="4" fill="#222930" stroke="#0a0a0a" />
          <path d="M421 855q0-3 3-3h28q3 0 3 3V892H421z" fill="#5c5e60" /><path d="M422 854h32v5h-32z" fill="#aaa" />
          <path d="M527 881.500a6 6 0 0 1 0 13" fill="#eff3f2" stroke="#0a0a0a" strokeWidth="2.500" />
        </Svg>
        <span className={`absolute left-[425px] top-[102px] h-[66px] rotate-180 whitespace-nowrap text-[20.500px] font-bold leading-[24px] text-white [writing-mode:vertical-rl] [text-orientation:sideways] ${CJK}`}>接收点</span>
        <span className={`absolute left-[461px] top-[122px] text-[16.300px] leading-[24px] text-[#2b2f34] ${CJK}`}>三维点</span>
      </div>
    </div>
  );
}

/* ---------- CAD window ---------- */

const Knob = ({ x, y }: { x: number; y: number }) => <rect x={x - 1.8} y={y - 1.8} width="3.600" height="3.600" fill="#eff3f2" stroke="#222930" strokeWidth="1.200" />;

function Logo({ w, h, className }: { w: number; h: number; className?: string }) {
  return (
    <Svg w={w} h={h} vb="0 0 30 30" className={className}>
      <rect x=".8" y=".8" width="28.400" height="28.400" fill="#c9c9c7" stroke="#111" strokeWidth="1.400" />
      <path d="M3.500 2v26M6.500 2v26M9.500 2v26M12.500 2v26M15.500 2v26M18.500 2v26M21.500 2v26M24.500 2v26M27 2v26" stroke="#f6f6f6" strokeWidth="1" />
      <path d="M5 2v14M11 20v8M14 2v9M20 16v12M23 12v16" stroke="#777" strokeWidth=".7" />
      <path d="M12 5V18Q12 28 5 24Q4 23 4 20" stroke="#3c4044" strokeWidth="3" opacity=".85" /><path d="M17.500 27V12Q18 4 27 8M17.500 15Q19 6 25 10" stroke="#3c4044" strokeWidth="3" opacity=".85" />
    </Svg>
  );
}

interface Tool { t: string; w: string; d?: boolean; i: ReactNode }
const drawTools: Tool[] = [
  { t: "点", w: "w-[38px]", i: <rect x="14" y="14" width="3.500" height="3.500" fill="#1b8a78" stroke="#222930" /> },
  { t: "线段", w: "w-[38px]", d: true, i: <><path d="M2.500 29L28.500 4" stroke="#222930" strokeWidth="1.300" /><Knob x={2.500} y={29} /><Knob x={28.500} y={4} /></> },
  { t: "圆", w: "w-[38px]", d: true, i: <><circle cx="15.500" cy="16" r="14.500" fill="url(#sky)" stroke="#222930" strokeWidth="1.200" /><path d="M15.500 16L25 7" stroke="#222930" /><Knob x={15.500} y={16} /></> },
  { t: "圆弧", w: "w-[38px]", d: true, i: <><path d="M2.500 29Q4 6 28.500 3.500" stroke="#222930" strokeWidth="1.300" /><Knob x={2.500} y={29} /><Knob x={11} y={12} /><Knob x={28.500} y={3.500} /></> },
  { t: "椭圆", w: "w-[38px]", d: true, i: <><ellipse cx="15.500" cy="17.500" rx="14" ry="10" fill="url(#sky)" stroke="#222930" strokeWidth="1.200" /><path d="M12 17.500h7M15.500 14v7" stroke="#222930" /><Knob x={15.500} y={8} /><Knob x={28.500} y={17} /></> },
  { t: "多边形", w: "w-[46px]", d: true, i: <><rect x="2.500" y="8.500" width="26" height="17" fill="url(#sky)" stroke="#222930" strokeWidth="1.200" /><Knob x={2.500} y={26} /><Knob x={28.500} y={8.500} /></> },
];
const editTools: Tool[] = [
  { t: "复制", w: "w-[38px]", i: <><circle cx="8.500" cy="9" r="6" fill="#eff3f2" stroke="#222930" /><path d="M16 7h10v5M23 10l3 4 3-4" stroke="#222930" strokeWidth="1.400" /><circle cx="24" cy="25" r="6" fill="#bcdcf6" stroke="#1c5cb8" /><circle cx="20.500" cy="22.500" r="6.500" fill="#a9d0f4" stroke="#1c5cb8" /></> },
  { t: "移动", w: "w-[38px]", i: <><path d="M12.500 14.500h6v6h-6z" stroke="#222930" /><path d="M15.500 3l3.500 5h-2.300v4h-2.400V8H12zM15.500 32l3.500-5h-2.300v-4h-2.400v4H12zM1 17.500l5-3.500v2.300h4v2.400H6V21zM30 17.500l-5-3.500v2.300h-4v2.400h4V21z" fill="#0a0a0a" /></> },
  { t: "旋转", w: "w-[38px]", i: <><path d="M8 8.500a12 12 0 1 0 17 2" stroke="#222930" strokeWidth="2.600" /><path d="M11 3v10l9-5z" fill="#222930" /></> },
  { t: "镜像", w: "w-[38px]", i: <><path d="M12 7v21H2z" stroke="#222930" strokeWidth="1.200" /><path d="M16 4v28" stroke="#0a0a0a" strokeWidth="1.300" /><path d="M20 7v21h10z" fill="#a9d0f4" stroke="#1c5cb8" strokeWidth="1.200" /></> },
  { t: "延伸", w: "w-[38px]", i: <><path d="M0 17.500h9" stroke="#222930" strokeWidth="1.600" /><path d="M11 17.500h13" stroke="#1c5cd0" strokeDasharray="4 2" /><path d="M19 29L30 7" stroke="#1c5cd0" strokeWidth="1.400" /></> },
  { t: "裁剪", w: "w-[38px]", i: <><path d="M0 17.500h9" stroke="#222930" strokeWidth="1.600" /><path d="M14 17.500h16" stroke="#1c5cd0" strokeDasharray="4 2" /><path d="M5 29L15 7" stroke="#1c5cd0" strokeWidth="1.400" /></> },
  { t: "偏移", w: "w-[38px]", i: <><path d="M30 28H5Q1 27 1.500 23T6 18h4Q6 6 15 5.500T20 17H30" stroke="#222930" strokeWidth="1.200" /><path d="M30 24.500H7Q4 23 6 21h8Q10 10 15 9.500Q19 11 17 20H30" stroke="#1c5cd0" strokeWidth="1.200" /></> },
  { t: "删除", w: "w-[38px]", i: <><path d="M13 17L27 3l4 1v6L18 21z" fill="#d8b060" stroke="#6b4a10" /><path d="M10 19l4-4 6 6-4 4z" fill="#ddd" stroke="#555" /><path d="M7 21l4-3 5 6-4 4-5-2z" fill="#e0401c" stroke="#8c200c" /><path d="M1 29.500h9M18 28.500h12" stroke="#222" strokeWidth="1.500" /></> },
];
const undoTools: Tool[] = [
  { t: "撤消", w: "w-[38px]", i: <path d="M1 15.500L12 6v5h8q9 1 9 9v9h-5v-5q0-5-5-5h-7v6z" fill="url(#sky)" stroke="#222930" strokeWidth="1.100" /> },
  { t: "恢复", w: "w-[38px]", i: <path d="M30 15.500L19 6v5h-8q-9 1-9 9v9h5v-5q0-5 5-5h7v6z" fill="url(#sky)" stroke="#222930" strokeWidth="1.100" /> },
];

function RibbonGroup({ title, tools, w, pad }: { title: string; tools: Tool[]; w: string; pad: string }) {
  return (
    <div className={`flex h-[91px] flex-col border-r border-[#c9c9c8] ${w}`}>
      <div className={`flex h-[73px] shrink-0 border-b border-[#d3cfca] ${pad}`}>
        {tools.map((o) => (
          <div key={o.t} className={`flex shrink-0 flex-col items-center ${o.w}`}>
            <Svg w={31} h={35}>{o.i}</Svg>
            <span className="mt-[1px] text-[12px] leading-[18px] text-[#3c4044]">{o.t}</span>
            {o.d && <Svg w={10} h={5} className="mt-[9px]"><path d="M0 0H10L5 5z" fill="#1c6ce0" /></Svg>}
          </div>
        ))}
      </div>
      <div className="text-center text-[12px] leading-[20px] text-[#0a0a0a]">{title}</div>
    </div>
  );
}

function CadRibbon() {
  return (
    <div className="flex h-[92px] border-b border-[#8a8a88]">
      <RibbonGroup title="GAMA" w="w-[54px]" pad="pl-[2px]" tools={[{ t: "GAMA", w: "w-[50px]", i: <g transform="translate(0 2)"><Logo w={31} h={30} /></g> }]} />
      <RibbonGroup title="绘图" w="w-[242px]" pad="pl-[2px]" tools={drawTools} />
      <RibbonGroup title="修改" w="w-[309px]" pad="pl-[2px]" tools={editTools} />
      <RibbonGroup title="撤消恢复" w="w-[81px]" pad="pl-[2px]" tools={undoTools} />
      <div className="mt-[10px] w-[92px] bg-[linear-gradient(#d3cfca_43px,#adadab_43px)]" />
      <div className="mt-[10px] w-[2px] bg-[#eff3f2]" />
      <div className="mt-[10px] flex grow flex-col bg-[linear-gradient(#d3cfca_43px,#adadab_43px)] pl-[4px]">
        <div className="-mt-[3px] flex h-[43px] gap-[10px] pl-[4px]">
          <Svg w={28} h={28}><path d="M14 2L26 14H20V25H8V14H2z" fill="url(#arrowUp)" stroke="#14304c" strokeWidth="1.300" /></Svg>
          <Svg w={28} h={28}><path d="M14 25L26 15H20V2H8V15H2z" fill="url(#arrowDown)" stroke="#14304c" strokeWidth="1.300" /></Svg>
          <Svg w={31} h={28}>{[1, 7, 13, 19].map((y) => <g key={y}><path d={`M0 ${y}L15 ${y + 3}V${y + 7}L0 ${y + 4}z`} fill="#222930" /><path d={`M30 ${y}L15 ${y + 3}V${y + 7}L30 ${y + 4}z`} fill="#8a8a8a" /></g>)}<path d="M0 5.500L15 8.500L30 5.500M0 11.500L15 14.500L30 11.500M0 17.500L15 20.500L30 17.500" stroke="#f6f6f6" strokeWidth="1.600" /></Svg>
          <Svg w={30} h={30} className="-ml-[2px]"><path d="M1.500 0V30" stroke="#0a0a0a" /><rect x="3.500" y="2.500" width="11" height="10" fill="#b8d4f4" stroke="#1c5cb8" strokeWidth="1.200" /><rect x="3.500" y="15.500" width="26" height="12" rx="1" fill="#f4f6f6" stroke="#33373c" /></Svg>
        </div>
        <div className="-mt-px flex h-[21px] w-[158px] items-center justify-between border border-[#b7c0d6] bg-[#eff3f2] pl-[2px] pr-[2px] text-[12px] text-[#6b6b6b]"><span>第1标准层 (第1自然层)</span><Svg w={7} h={4}><path d="M0 0H7L3.500 4z" fill="#0a0a0a" /></Svg></div>
      </div>
    </div>
  );
}

function CadView() {
  return (
    <div className="h-[318px] bg-[#222930]">
      <Svg w={943} h={318} vb="949 92 943 318">
        <path d="M1340 273L1318 237M1340.500 273V246M1340 273L1385 253.500" stroke="#e0ae18" strokeWidth="1.200" />
        <g stroke="#e6eaea" strokeWidth="1">
          <path d="M1317 219l6 6 6-6M1323 225v5M1345 226h10l-10 10h10M1396 236l11 11M1407 236l-11 11" />
        </g>
        <circle cx="1340.500" cy="273" r="2.500" fill="#fff" /><circle cx="1407" cy="244.500" r="2.500" fill="#fff" /><circle cx="1473" cy="215.500" r="2.500" fill="#fff" />
        <path d="M1000 359L981 329" stroke="#58b820" strokeWidth="4" /><path d="M974 318l2 18 5-2 7-5z" fill="#6cd42c" />
        <path d="M1000 359L1037 344" stroke="#e03458" strokeWidth="4" /><path d="M1048 338l-16 0 4 11z" fill="#f0466c" />
        <path d="M1000 359V334" stroke="#2c50c8" strokeWidth="5" /><path d="M1000 325l-6 10q6 4 12 0z" fill="#3c68e4" /><circle cx="1000" cy="358" r="2.500" fill="#3050b8" />
        <path d="M978 304l5 6 5-6M983 310v6" stroke="#6cd42c" /><path d="M1003 312h10l-10 10h10" stroke="#4c7cf0" /><path d="M1055 322l11 10M1066 322l-11 10" stroke="#e03458" />
      </Svg>
    </div>
  );
}

/* ---------- Y-GAMA window ---------- */

const sideItems: { t: string; i: ReactNode }[] = [
  { t: "数据结构", i: null },
  { t: "数据容器", i: <><path d="M1 6L23 5L21 17H7z" fill="#dcdad6" stroke="#999" /><path d="M4 9h18M5 13h16M8 6l2 11M13 6v11M18 6l-1 11" stroke="#999" strokeWidth=".8" /><path d="M24 2L22 19H6" stroke="#aaa" strokeWidth="1.500" /><circle cx="7" cy="22" r="3" fill="#667084" /><circle cx="18" cy="22" r="3" fill="#667084" /><circle cx="24" cy="2.500" r="2" fill="#e8a020" /></> },
  { t: "数据交互", i: <><rect x="4" y="2" width="16" height="18" fill="#dce6f4" stroke="#8ca0bc" /><path d="M8 2v18M12 2v18M16 2v18M4 6h16M4 10h16M4 14h16" stroke="#8cacd4" strokeWidth=".8" /><rect x="3" y="20" width="21" height="4.500" rx="2" fill="#aaa" stroke="#555" /><circle cx="4.500" cy="22" r="3" fill="#4cb82c" /><path d="M11 22h7" stroke="#eee" strokeWidth="1.500" /></> },
  { t: "GH接口", i: <><path d="M6 5h14M12 5v13h7" stroke="#999" strokeWidth="2" /><circle cx="5" cy="5" r="4.500" fill="url(#pearl)" /><circle cx="20.500" cy="5" r="4.500" fill="url(#pearl)" /><circle cx="20.500" cy="17" r="4.500" fill="url(#pearl)" /></> },
  { t: "文字", i: <><rect x="1.500" y="3.500" width="21" height="15" fill="#d6e4f8" stroke="#7890b8" /><path d="M4.500 9V6.500h9V9M9 6.500V15M7 15h4M14 11V9.500h6V11M17 9.500V15" stroke="#24406c" strokeWidth="1.500" /><path d="M9 24L22 9l3 2-12 12z" fill="#f0b040" stroke="#8c6420" strokeWidth=".7" /></> },
  { t: "PGX卡片", i: <><path d="M1 4H20L25 8V22H1z" fill="#eff3f2" stroke="#a8acb0" /><path d="M4.500 8.500h8v7h-8zM14.500 6.500h7v7h-7zM10 14h8v6h-8zM4.500 11h8M14.500 9h7" fill="#e4f2fc" stroke="#2c88cc" /></> },
  { t: "工业厂房", i: <><path d="M2 1l6 4h9l7-4v14q-2 10-11 10T2 15z" fill="#d9c4b4" stroke="#8a7468" /><path d="M10 5l3 8 3-8z" fill="#f8f4f0" /><path d="M7 17q6 9 12 0l-6 -2z" fill="#fff" /><circle cx="8" cy="13.500" r="2.800" fill="#8a6a30" /><circle cx="18" cy="13.500" r="2.800" fill="#8a6a30" /><circle cx="8" cy="13.500" r="1.300" fill="#111" /><circle cx="18" cy="13.500" r="1.300" fill="#111" /><path d="M12 17.500h2l-1 1.500z" fill="#c05050" /></> },
];

function Port({ x, y }: { x: number; y: number }) {
  return <path d={`M${x} ${y - 5}q3 1 3 5t-3 5`} stroke="#a0a0a0" strokeWidth="2" fill="#eff3f2" />;
}

const strip = "bg-[linear-gradient(150deg,#d6e6ef_16%,#d0d8ea_16%_36%,#adc8f0_36%_66%,#8cacee_66%)]";
const vert = "flex items-center justify-start whitespace-pre text-[17.700px] font-bold leading-[20px] text-[#0a0a0a] [writing-mode:vertical-rl]";
const nodeBox = "absolute flex border-2 border-[#aaa9a8] bg-[linear-gradient(150deg,#eff3f2_55%,#d6e6ef_55%_79%,#d0d8ea_79%)] text-[13.800px] leading-[20px] text-[#222930]";

function GamaCanvas() {
  return (
    <div className="relative grow overflow-hidden border-l-2 border-t-2 border-[#77787a]">
      <Svg w={783} h={450} vb="1110 481 783 450" className="absolute left-0 top-0">
        <path d="M1278 662L1275 679L1286 684L1291 681Z" stroke="#0a0a0a" strokeWidth="2" fill="#eff3f2" /><path d="M1276 678L1283 670L1286 684" stroke="#0a0a0a" strokeWidth="2" /><path d="M1282 672L1290 681L1286 683z" fill="#0a0a0a" />
        <g transform="translate(0 4)">
          <path d="M1129 710H1405V734H1129z" fill="#8a9ba8" />
          <path d="M1127 708.500H1351L1365 694.500H1382L1396 708.500H1403V712Q1408 715 1407 720T1403 728V731.500H1127z" fill="#eff3f2" />
          <path d="M1236 731L1276 709H1351L1365 695H1382L1390 702L1340 731z" fill="#d6e6ef" /><path d="M1340 731L1390 703L1396 709H1403V712Q1408 715 1407 720T1403 728V731z" fill="#cdeadb" />
          <path d="M1127 708.500H1351L1365 694.500H1382L1396 708.500H1403V712Q1408 715 1407 720T1403 728V731.500H1127z" stroke="#94c6b0" strokeWidth="2" />
          <path d="M1245 719.500H1382M1245.500 714V725M1279.500 714V725M1313.500 714V725M1347.500 714V725M1381.500 714V725M1259.500 717V722M1272.500 717V722M1299.500 717V722M1327.500 717V722M1340.500 717V722M1354.500 717V722M1368.500 717V722" stroke="#8f9696" />
          <rect x="1275.500" y="716.500" width="22" height="6" fill="#f6f8f8" stroke="#aaa" />
          <path d="M1408 719.500H1452" stroke="#8fb7ac" strokeWidth="2" />
        </g>
        <path d="M1569 693.500H1604M1569 696.500H1604M1688 728.500H1729M1688 731.500H1729" stroke="#8a8a8a" strokeWidth="1.300" />
      </Svg>
      <span className={`absolute left-[25px] top-[228px] text-[18px] font-bold leading-[26px] text-[#0a0a0a] ${CJK}`}>数字滑动条</span>
      <span className="absolute left-[259px] top-[216px] text-[13.500px] leading-[20px] text-[#33373c]">3</span>
      <div className={`${nodeBox} left-[341px] top-[170px] h-[89px] w-[116px] ${CJK}`}>
        <div className="flex w-[41px] flex-col justify-between pb-[5px] pl-[3px] pt-[2px]"><span>首项</span><span>公差</span><span>项数</span></div>
        <div className={`w-[29px] ${strip} ${vert} pt-[6px]`}>等差数列</div>
        <div className="flex grow items-center justify-end pb-[3px] pr-[3px]">数列</div>
      </div>
      <div className={`${nodeBox} left-[493px] top-[195px] h-[108px] w-[82px] ${CJK}`}>
        <div className="flex w-[22px] flex-col justify-between py-[6px] pl-[4px]"><span>X</span><span>Y</span><span>Z</span></div>
        <div className={`w-[29px] ${strip} ${vert} pt-[5px]`}>点<span className="pt-[12px] tracking-[1.500px]">(XYZ)</span></div>
        <div className="flex grow items-center justify-end pb-[1px] pr-[3px]">点</div>
      </div>
      <div className={`${nodeBox} left-[618px] top-[195px] h-[108px] w-[90px] ${CJK}`}>
        <div className="flex w-[56px] items-center pb-[1px] pl-[4px]">三维点</div>
        <div className={`w-[29px] ${strip} ${vert} pt-[5px]`}>发送三维点</div>
      </div>
      <Svg w={783} h={450} vb="1110 481 783 450" className="absolute left-0 top-0">
        <Port x={1451} y={666} /><Port x={1451} y={695} /><Port x={1451} y={724} /><Port x={1566} y={695} />
        <Port x={1603} y={695} /><Port x={1603} y={730} /><Port x={1603} y={765} /><Port x={1684} y={730} /><Port x={1728} y={730} />
      </Svg>
    </div>
  );
}

function Gama() {
  return (
    <>
      <div className="h-[14px] border-t-2 border-[#eff3f2] bg-[linear-gradient(#6b6969_9px,#eff3f2_9px_12px)]" />
      <div className={`flex h-[505px] flex-col rounded-tl-[8px] border-l-[4px] border-t border-[#b9b7b4] bg-[#eff3f2] ${CJK}`}>
        <div className="flex h-[54px] shrink-0 items-center">
          <Logo w={44} h={38} className="mt-[3px]" />
          <div className="ml-[12px] h-[30px] border-l-2 border-dotted border-[#a8a8a8]" />
          <div className="ml-[11px] mt-[1px] flex gap-[21px] text-[15.200px] text-[#0a0a0a]"><span>文件</span><span>编辑</span><span>帮助</span></div>
          <span className={`ml-[48px] whitespace-pre text-[15.400px] text-[#0a0a0a] ${MONO}`}>盈建科数字化智能设计软件<span className="text-[12.900px]"> Y-GAMA - </span>新文件*</span>
          <span className="-mt-[2px] ml-auto mr-[37px] text-[15px] text-[#0a0a0a]">窗口置顶</span>
          <Svg w={32} h={14} className="mt-[4px]"><rect x="1" y="2" width="29" height="9" rx="1" fill="#eff3f2" stroke="#4c6088" strokeWidth="1.300" /><rect x="3" y="3" width="25" height="4" fill="#b4ccf0" /></Svg>
          <Svg w={32} h={30} className="ml-[24px] mt-[5px]"><rect x="1.500" y="2.500" width="29" height="25" fill="#f2f5f5" stroke="#1468a8" strokeWidth="1.300" /><rect x="2" y="3" width="28" height="4" fill="#3c9ce0" /><path d="M3 9h26" stroke="#c4c8cc" strokeWidth="2" /></Svg>
          <Svg w={31} h={31} className="ml-[23px] mt-[5px]"><path d="M9 1L16 8L23 1L30 7L23.500 15L31 22L24 30L16 22L8 30L1 23L8 15L1 8z" fill="url(#cross)" stroke="#701018" /></Svg>
        </div>
        <div className="flex grow overflow-hidden">
          <div className="flex w-[148px] shrink-0 flex-col overflow-hidden border border-b-0 border-[#a3a5a6] pl-[3px] pr-[2px]">
            <div className="-mt-[36px]">
              {sideItems.map(({ t, i }, n) => (
                <div key={t} className="h-[68.800px]">
                  <div className={`flex h-[65px] w-[142px] flex-col items-center ${n === 3 ? "border-l-[7px] border-[#0a0a0a] bg-[#d3cfca] pl-[23px] font-bold" : "pl-[30px]"}`}>
                    <Svg w={26} h={26} className="mt-[13px]">{i}</Svg>
                    <span className="mt-[-1px] whitespace-nowrap text-[15px] leading-[22px] text-[#0a0a0a]">{t}</span>
                  </div>
                </div>
              ))}
            </div>
          </div>
          <div className="w-[7px] shrink-0" />
          <GamaCanvas />
        </div>
      </div>
    </>
  );
}

export default function App() {
  return (
    <div className={`flex h-[929px] w-[1893px] overflow-hidden bg-[#eff3f2] ${UI}`}>
      <Defs />
      <div className="w-[947px] shrink-0 border-l border-[#a9a9a9]">
        <RhinoHead />
        <RhinoMain />
        <RhinoFoot />
        <Grasshopper />
      </div>
      <div className="w-[2px] shrink-0 bg-[linear-gradient(#7a7a78_90px,#3a3f44_90px_508px,#0c1220_508px)]" />
      <div className={`w-[944px] shrink-0 ${CJK}`}>
        <CadRibbon />
        <CadView />
        <Gama />
      </div>
    </div>
  );
}
